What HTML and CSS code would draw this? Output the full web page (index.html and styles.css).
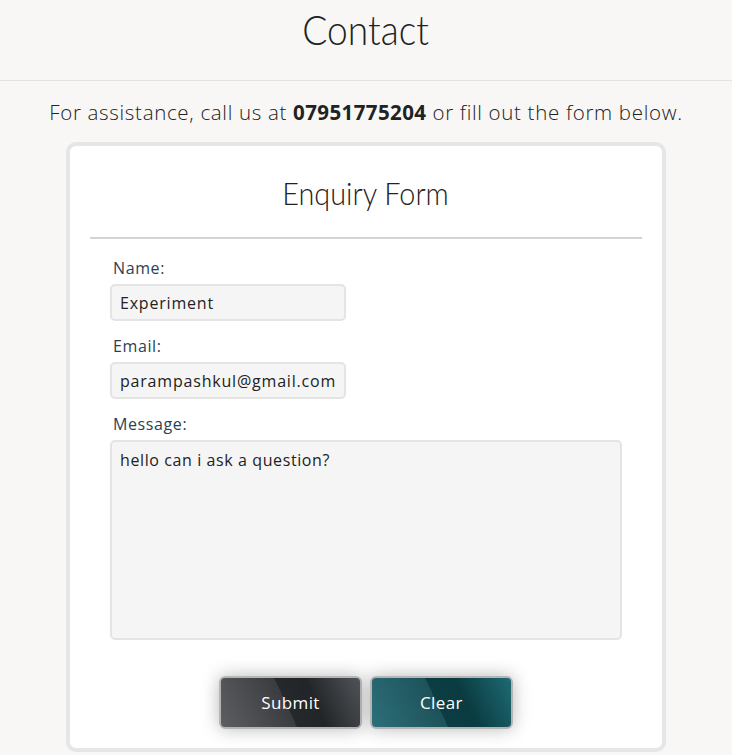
FILE: index.html
```html
<!DOCTYPE html>
<html lang="en">
<head>
<meta charset="utf-8">
<title>Contact</title>
<link rel="stylesheet" href="styles.css">
</head>
<body>
<header class="page-header">
  <h1 class="page-title"><span class="condensed">Contact</span></h1>
</header>
<main class="content">
  <p class="intro">For assistance, call us at <strong>07951775204</strong> or fill out the form below.</p>
  <section class="card">
    <h2 class="card-title"><span class="condensed">Enquiry Form</span></h2>
    <hr class="divider">
    <form class="enquiry">
      <label class="field-label" for="name">Name:</label>
      <input class="field-input" id="name" type="text" value="Experiment">
      <label class="field-label" for="email">Email:</label>
      <input class="field-input" id="email" type="email" value="parampashkul@gmail.com">
      <label class="field-label" for="message">Message:</label>
      <textarea class="field-area" id="message">hello can i ask a question?</textarea>
      <div class="actions">
        <button type="button" class="btn btn-dark">Submit</button>
        <button type="button" class="btn btn-teal">Clear</button>
      </div>
    </form>
  </section>
</main>
</body>
</html>
```
FILE: styles.css
```css
* { box-sizing: border-box; }

html, body {
  margin: 0;
  padding: 0;
  background: #f8f7f5;
  color: #222;
  font-family: "Open Sans", "DejaVu Sans", sans-serif;
}

.condensed {
  display: inline-block;
  transform-origin: center;
}

.page-header {
  height: 81px;
  border-bottom: 1px solid #e2e2e2;
  text-align: center;
  padding-top: 4px;
}

.page-title {
  margin: 0;
  font-family: "Lato", "Liberation Sans", sans-serif;
  font-weight: 300;
  font-size: 42px;
  line-height: 50px;
  color: #222;
}

.page-title .condensed { transform: scaleX(0.885); }

.content {
  display: flex;
  flex-direction: column;
  align-items: center;
}

.intro {
  margin: 18px 0 0;
  font-size: 20.5px;
  line-height: 26px;
  font-weight: 300;
  letter-spacing: 0.68px;
  color: #222;
}

.intro strong { font-weight: 700; letter-spacing: 0.4px; }

.card {
  margin-top: 17px;
  width: 600px;
  background: #fff;
  border: 4px solid #e6e6e6;
  border-radius: 10px;
  padding: 20px 20px 19px;
}

.card-title {
  margin: 7px 0 0;
  text-align: center;
  font-family: "Lato", "Liberation Sans", sans-serif;
  font-weight: 300;
  font-size: 31px;
  line-height: 40px;
  color: #222;
}

.card-title .condensed { transform: scaleX(0.93); }

.divider {
  margin: 24px 0 0;
  border: 0;
  height: 2px;
  background: #d4d4d4;
}

.enquiry {
  display: flex;
  flex-direction: column;
  align-items: flex-start;
  padding: 0 20px;
  margin-top: 20px;
}

.field-label {
  display: block;
  font-size: 16px;
  line-height: 18px;
  letter-spacing: 0.6px;
  color: #2b3f52;
  padding-left: 3px;
  margin-bottom: 7px;
}

.field-input {
  width: 236px;
  height: 37px;
  background: #f5f5f5;
  border: 2px solid #e4e4e4;
  border-radius: 5px;
  padding: 0 8px;
  font-family: inherit;
  font-size: 16px;
  letter-spacing: 0.8px;
  color: #222;
  margin-bottom: 16px;
}

.field-area {
  width: 512px;
  height: 200px;
  background: #f5f5f5;
  border: 2px solid #e4e4e4;
  border-radius: 5px;
  padding: 7px 8px;
  font-family: inherit;
  font-size: 16px;
  line-height: 22px;
  letter-spacing: 0.6px;
  color: #222;
  resize: none;
}

.actions {
  align-self: center;
  display: flex;
  gap: 8px;
  margin-top: 36px;
}

.btn {
  width: 143px;
  height: 53px;
  border: 2px solid #b5b5b5;
  border-radius: 6px;
  color: #fff;
  font-family: inherit;
  font-size: 17px;
  letter-spacing: 0.4px;
  box-shadow: 0 0 18px rgba(0, 0, 0, 0.28);
  cursor: pointer;
}

.btn-dark {
  background: linear-gradient(65deg, #5c5e62 0%, #3a3c40 47%, #26292c 47%, #222528 65%, #515458 100%);
}

.btn-teal {
  background: linear-gradient(65deg, #2c6f79 0%, #1e525a 47%, #0c3d43 47%, #0a3b41 65%, #1f6a73 100%);
}
```
